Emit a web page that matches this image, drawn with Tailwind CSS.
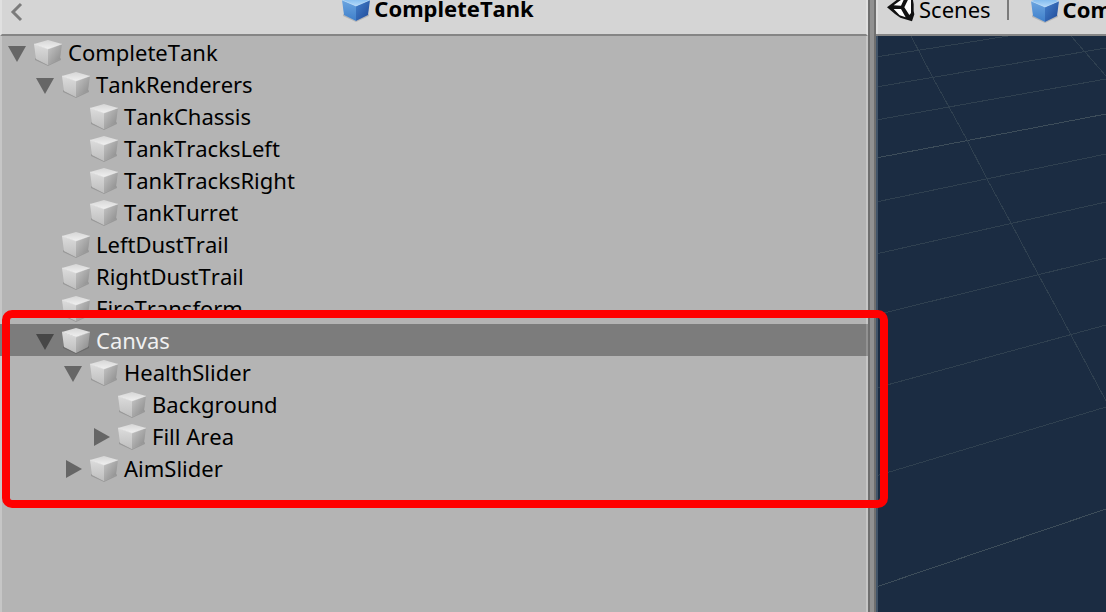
<!DOCTYPE html>
<html lang="en">
<head>
<meta charset="utf-8">
<title>CompleteTank</title>
<script src="https://cdn.jsdelivr.net/npm/@tailwindcss/browser@4"></script>
</head>
<body class="h-screen overflow-hidden bg-[#b4b4b4] font-['Noto_Sans','Open_Sans',sans-serif] text-[22px] text-black [font-kerning:none]">
<svg class="absolute size-0" aria-hidden="true">
  <defs>
    <linearGradient id="gt" x1="0" y1="0" x2="0" y2="1"><stop offset="0" stop-color="#d6d6d6"/><stop offset="1" stop-color="#f0f0f0"/></linearGradient>
    <linearGradient id="gl" x1="0" y1="0" x2="0" y2="1"><stop offset="0" stop-color="#dcdcdc"/><stop offset="1" stop-color="#bebebe"/></linearGradient>
    <linearGradient id="gr" x1="0" y1="0" x2="1" y2="1"><stop offset="0" stop-color="#c6c6c6"/><stop offset="1" stop-color="#868686"/></linearGradient>
    <linearGradient id="bt" x1="0" y1="0" x2="0" y2="1"><stop offset="0" stop-color="#6fb0ea"/><stop offset="1" stop-color="#b4dafa"/></linearGradient>
    <linearGradient id="bl" x1="0" y1="0" x2="0" y2="1"><stop offset="0" stop-color="#6ba5e0"/><stop offset="1" stop-color="#3f7fca"/></linearGradient>
    <linearGradient id="br" x1="0" y1="0" x2="1" y2="1"><stop offset="0" stop-color="#4481cc"/><stop offset="1" stop-color="#1e4796"/></linearGradient>
    <symbol id="cube" viewBox="0 0 28 28">
      <path d="M1 20L14 27L27 20V22L14 28L1 22Z" fill="#000" opacity=".15"/>
      <path d="M0 6L14 11V27L2 21Z" fill="url(#gl)"/><path d="M28 6L14 11V27L26 21Z" fill="url(#gr)"/><path d="M0 6L14 2L28 6L14 11Z" fill="url(#gt)"/>
      <path d="M0 6L14 11L28 6" fill="none" stroke="#f4f4f4" stroke-opacity=".4"/>
    </symbol>
    <symbol id="bluecube" viewBox="0 0 28 28">
      <path d="M1 20L14 27L27 20V22L14 28L1 22Z" fill="#000" opacity=".15"/>
      <path d="M0 6L14 12V27L2 21Z" fill="url(#bl)"/><path d="M28 6L14 12V27L26 21Z" fill="url(#br)"/><path d="M0 6L14 2L28 6L14 12Z" fill="url(#bt)"/>
      <path d="M0 6L14 12L28 6" fill="none" stroke="#b9dcfa" stroke-opacity=".6"/>
    </symbol>
    <symbol id="down" viewBox="0 0 18 20"><path d="M0 4H18L9 20Z" fill="currentColor"/></symbol>
    <symbol id="right" viewBox="0 0 18 20"><path d="M2 2V20L18 11Z" fill="currentColor"/></symbol>
  </defs>
</svg>
<div class="flex h-full">
  <section class="relative z-10 flex min-w-0 grow-[868] basis-0 flex-col" aria-label="Hierarchy">
    <header class="flex h-9 items-start border-x-2 border-b-2 border-x-[#e0e0e0] border-b-[#858585] bg-[#d5d5d5]">
      <button class="ml-2 flex h-6 w-4 items-center" aria-label="Back">
        <svg class="h-6 w-4" viewBox="0 0 16 24"><path d="M11 4L3 12L11 20" fill="none" stroke="#7b7b7b" stroke-width="3"/></svg>
      </button>
      <h1 class="flex h-4 grow items-center justify-center gap-1 pr-4 font-bold leading-4">
        <svg class="size-7 shrink-0"><use href="#bluecube"/></svg>CompleteTank
      </h1>
    </header>
    <ul class="grow leading-8 text-black shadow-[inset_2px_0_0_#c6c6c6,inset_-2px_0_0_#c6c6c6]">
      <li class="flex h-8 items-center pl-2"><button class="mr-2 w-[18px] text-[#666]" aria-label="Collapse CompleteTank"><svg class="h-5 w-[18px]"><use href="#down"/></svg></button><svg class="mr-1.5 size-7"><use href="#cube"/></svg>CompleteTank</li>
      <li class="flex h-8 items-center pl-9"><button class="mr-2 w-[18px] text-[#666]" aria-label="Collapse TankRenderers"><svg class="h-5 w-[18px]"><use href="#down"/></svg></button><svg class="mr-1.5 size-7"><use href="#cube"/></svg>TankRenderers</li>
      <li class="flex h-8 items-center pl-[90px]"><svg class="mr-1.5 size-7"><use href="#cube"/></svg>TankChassis</li>
      <li class="flex h-8 items-center pl-[90px]"><svg class="mr-1.5 size-7"><use href="#cube"/></svg>TankTracksLeft</li>
      <li class="flex h-8 items-center pl-[90px]"><svg class="mr-1.5 size-7"><use href="#cube"/></svg>TankTracksRight</li>
      <li class="flex h-8 items-center pl-[90px]"><svg class="mr-1.5 size-7"><use href="#cube"/></svg>TankTurret</li>
      <li class="flex h-8 items-center pl-[62px]"><svg class="mr-1.5 size-7"><use href="#cube"/></svg>LeftDustTrail</li>
      <li class="flex h-8 items-center pl-[62px]"><svg class="mr-1.5 size-7"><use href="#cube"/></svg>RightDustTrail</li>
      <li class="flex h-8 items-center pl-[62px]"><svg class="mr-1.5 size-7"><use href="#cube"/></svg>FireTransform</li>
      <li class="relative">
        <div class="flex h-8 items-center border-r-2 border-[#929292] bg-[#7c7c7c] pl-9 text-[#f0f0f0]"><button class="mr-2 w-[18px] text-[#474747]" aria-label="Collapse Canvas"><svg class="h-5 w-[18px]"><use href="#down"/></svg></button><svg class="mr-1.5 size-7"><use href="#cube"/></svg>Canvas</div>
        <ul>
          <li class="flex h-8 items-center pl-16"><button class="mr-2 w-[18px] text-[#666]" aria-label="Collapse HealthSlider"><svg class="h-5 w-[18px]"><use href="#down"/></svg></button><svg class="mr-1.5 size-7"><use href="#cube"/></svg>HealthSlider</li>
          <li class="flex h-8 items-center pl-[118px]"><svg class="mr-1.5 size-7"><use href="#cube"/></svg>Background</li>
          <li class="flex h-8 items-center pl-[92px]"><button class="mr-2 w-[18px] text-[#666]" aria-label="Expand Fill Area"><svg class="h-5 w-[18px]"><use href="#right"/></svg></button><svg class="mr-1.5 size-7"><use href="#cube"/></svg>Fill Area</li>
          <li class="flex h-8 items-center pl-16"><button class="mr-2 w-[18px] text-[#666]" aria-label="Expand AimSlider"><svg class="h-5 w-[18px]"><use href="#right"/></svg></button><svg class="mr-1.5 size-7"><use href="#cube"/></svg>AimSlider</li>
        </ul>
        <div class="pointer-events-none absolute -top-3.5 -right-5 -bottom-6 left-0.5 rounded-[10px] border-8 border-[#ff0000]"></div>
      </li>
    </ul>
  </section>
  <div class="w-2 shrink-0 border-x-2 border-[#6f6f6f] bg-[#919191]"></div>
  <section class="flex min-w-0 grow-[230] basis-0 flex-col overflow-hidden" aria-label="Scene">
    <nav class="flex h-9 shrink-0 items-start overflow-hidden border-b-2 border-[#858585] bg-[#d5d5d5] pl-[11px] leading-[18px] shadow-[inset_2px_0_0_#e0e0e0]">
      <a href="#" class="flex h-[18px] items-center gap-1">
        <svg class="size-7 shrink-0" viewBox="0 -6 84 84"><path d="M0 31L24 13L50 -8L82 -6L78 10L80 22V42L82 52L75 73L40 62L24 51Z" fill="#111"/><path d="M20 25L54 0L42 26ZM20 36H42L56 61L38 55ZM66 2L72 8V48L67 54L52 31Z" fill="#fff"/></svg>Scenes
      </a>
      <span class="mx-4 h-5 w-0.5 shrink-0 bg-[#7b7b7b]"></span>
      <a href="#" class="flex h-[18px] shrink-0 items-center gap-1 pl-1.5 font-bold">
        <svg class="size-7 shrink-0"><use href="#bluecube"/></svg>CompleteTank
      </a>
    </nav>
    <div class="grow overflow-hidden border-l-2 border-[#425468] bg-[#1b2c42]">
      <svg class="h-[576px] w-full" viewBox="2 0 228 576" preserveAspectRatio="xMinYMin slice" fill="none" stroke="#2f4050" shape-rendering="crispEdges">
        <path d="M0 21L132 0M0 51L230 12M0 84L230 43M0 166L230 118M0 218L230 166M0 279L230 222M0 352L230 289M0 440L230 371"/>
        <path d="M0 122L230 78M0 551L230 473" stroke="#3d4d5a"/>
        <path d="M35 0L57 42L73 71L91 104L111 143L135 187L162 238L187 284L230 365M195 0L230 40"/>
      </svg>
    </div>
  </section>
</div>
</body>
</html>
